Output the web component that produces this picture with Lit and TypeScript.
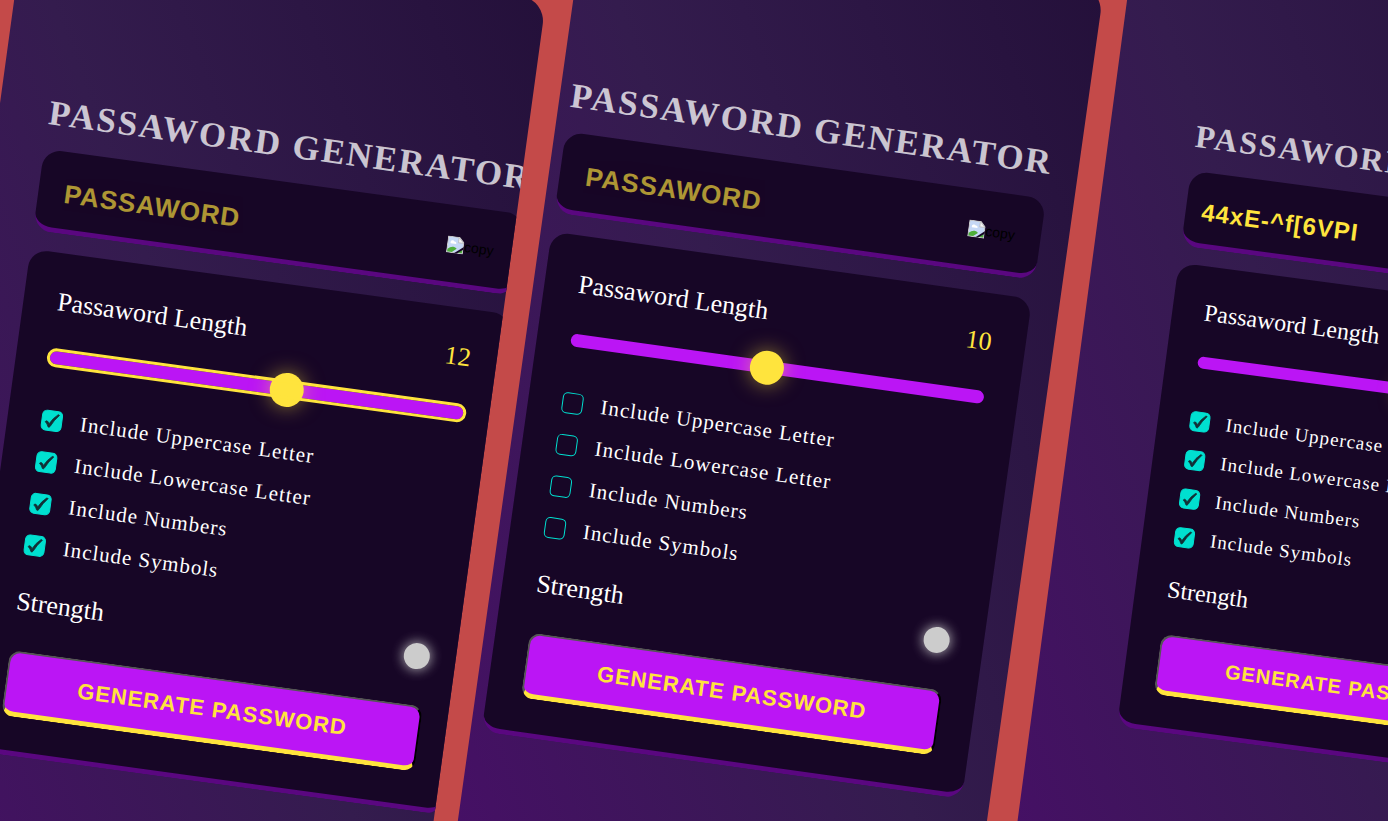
import { LitElement, html, css, svg } from "lit";
import { customElement, property } from "lit/decorators.js";

interface PanelData {
  slot: string;
  password: string;
  length: number;
  checked: boolean;
}

const PANELS: PanelData[] = [
  { slot: "first", password: "", length: 12, checked: true },
  { slot: "second", password: "", length: 10, checked: false },
  { slot: "third", password: "44xE-^f[6VPI", length: 12, checked: true },
];

const OPTIONS = [
  "Include Uppercase Letter",
  "Include Lowercase Letter",
  "Include Numbers",
  "Include Symbols",
];

const brokenImage = svg`
  <path d="M.5.5h10.500l4.500 4.500v10.500H.5z" fill="#c6d8f6" stroke="#c9c9c9"/>
  <path d="M3 6a2 2 0 0 1 3.600-1.200A1.700 1.700 0 0 1 8.500 7H3.300z" fill="#fff"/>
  <path d="M1 15v-2.500C3 10.500 5 9.500 7 10c1.200.3 2 .8 2.600 1.400L5.500 15z" fill="#4fae3a"/>
  <path d="M10.500 15l4.500-3.500V15z" fill="#4fae3a"/>
  <path d="M16.500 8.500L7.500 16h2.500l6.500-5z" fill="#170626"/>
  <path d="M10.500.5v5h5z" fill="#f4f4f4" stroke="#b9b9b9" stroke-width=".7"/>
`;

@customElement("password-panel")
class PasswordPanel extends LitElement {
  @property() password = "";
  @property({ type: Number }) length = 10;
  @property({ type: Boolean }) checked = false;

  static styles = css`
    :host {
      display: block;
      width: var(--content-width);
      font-family: "Liberation Serif", "Times New Roman", serif;
      color: #fff;
    }
    * {
      box-sizing: border-box;
    }
    .title {
      margin: 0 0 16px;
      font-size: var(--title-size);
      line-height: var(--title-line);
      letter-spacing: 2px;
      text-transform: uppercase;
      white-space: nowrap;
      color: rgba(255, 255, 255, 0.75);
    }
    .display {
      display: flex;
      align-items: center;
      justify-content: space-between;
      height: var(--display-height);
      margin-bottom: var(--display-gap);
      padding: 2px 26px 0 var(--display-pad);
      background: #170626;
      border-bottom: 5px solid #5a0780;
      border-radius: 18px;
    }
    .output {
      flex: 1;
      min-width: 0;
      padding: 6px 0 0;
      border: 0;
      outline: 0;
      background: transparent;
      color: #ffe43d;
      font: bold var(--text-size) "Liberation Sans", Arial, sans-serif;
      letter-spacing: 1px;
    }
    .output::placeholder {
      color: #ffe43d;
      opacity: 0.65;
    }
    .copy {
      display: flex;
      align-items: center;
      padding: 0;
      border: 0;
      background: none;
      color: #000;
      font: 14px "Liberation Sans", Arial, sans-serif;
    }
    .copy svg {
      width: 17px;
      height: 17px;
    }
    .settings {
      padding: var(--pad);
      background: #170626;
      border-bottom: 5px solid #5a0780;
      border-radius: 18px;
    }
    .row {
      display: flex;
      align-items: center;
      justify-content: space-between;
      font-size: var(--text-size);
      line-height: var(--text-line);
    }
    .count {
      color: #ffe43d;
    }
    .slider {
      display: block;
      appearance: none;
      width: 100%;
      height: var(--track);
      margin: var(--slider-top) 0 var(--slider-bottom);
      border-radius: 10px;
      background: #bb15f5;
      outline: 0;
    }
    .slider.active {
      outline: 3px solid #ffe43d;
    }
    .slider::-webkit-slider-thumb {
      appearance: none;
      width: 34px;
      height: 34px;
      border-radius: 50%;
      background: #ffe43d;
      box-shadow: 0 0 20px rgba(255, 228, 61, 0.5);
    }
    .options {
      display: grid;
      gap: var(--option-gap);
      margin-bottom: var(--options-bottom);
    }
    .option {
      display: flex;
      align-items: center;
      gap: var(--option-indent);
      font-size: var(--option-size);
      line-height: var(--option-line);
      letter-spacing: 1px;
      white-space: nowrap;
    }
    .tick {
      position: relative;
      display: grid;
      flex: none;
    }
    .tick input {
      appearance: none;
      width: var(--box);
      height: var(--box);
      margin: 0;
      border: 1px solid #00e0d0;
      border-radius: 5px;
    }
    .tick input:checked {
      background: #00e0d0;
    }
    .tick svg {
      display: none;
      position: absolute;
      inset: 0;
      width: 100%;
      height: 100%;
      pointer-events: none;
    }
    .tick input:checked + svg {
      display: block;
    }
    .lamp {
      width: 26px;
      height: 26px;
      border-radius: 50%;
      background: #ccc;
      box-shadow: 0 0 12px 1px rgba(204, 204, 204, 0.8);
    }
    .generate {
      display: block;
      width: 100%;
      height: var(--button-height);
      margin-top: var(--button-top);
      padding: 0;
      border: 2px solid;
      border-color: #555 #000 #ffe43d #555;
      border-bottom-width: 5px;
      border-radius: 12px;
      background: #bb15f5;
      color: #ffe43d;
      font: bold var(--button-size) "Liberation Sans", Arial, sans-serif;
      letter-spacing: 1px;
      text-transform: uppercase;
    }
  `;

  render() {
    return html`
      <h1 class="title">Passaword Generator</h1>
      <div class="display">
        <input class="output" readonly placeholder="PASSAWORD" aria-label="Password" .value=${this.password} />
        <button class="copy" type="button">
          <svg viewBox="0 0 16 16" aria-hidden="true">${brokenImage}</svg>copy
        </button>
      </div>
      <div class="settings">
        <div class="row">
          <label for="length">Passaword Length</label>
          <span class="count">${this.length}</span>
        </div>
        <input
          id="length"
          class="slider ${this.length === 12 && !this.password ? "active" : ""}"
          type="range" min="1" max="20" .value=${String(this.length)}
        />
        <div class="options">
          ${OPTIONS.map(
            (text) => html`
              <label class="option">
                <span class="tick">
                  <input type="checkbox" .checked=${this.checked} />
                  <svg viewBox="0 0 20 20" aria-hidden="true">
                    <path d="M3.800 11.600q.9-1.300 2-.8 1.100.6 1.900 2.400Q10.800 7 15 3.600q1.100-.5 1.500.3Q12 9 9.200 15.300q-.9 1.700-2 .9-1.200-2.900-3.400-4.600z" fill="#123036" stroke="#123036" stroke-width=".7" />
                  </svg>
                </span>
                ${text}
              </label>
            `
          )}
        </div>
        <div class="row">
          <span>Strength</span>
          <span class="lamp"></span>
        </div>
        <button class="generate" type="button">Generate Password</button>
      </div>
    `;
  }
}

@customElement("app-root")
class AppRoot extends LitElement {
  static styles = css`
    :host {
      display: block;
    }
    .stage {
      display: flex;
      align-items: flex-start;
      box-sizing: border-box;
      height: 100vh;
      padding-left: 24px;
      overflow: hidden;
      background: #c44a49;
    }
    .panel {
      box-sizing: border-box;
      flex: 0 0 38.6%;
      height: 990px;
      padding-top: 160px;
      overflow: hidden;
      border-radius: 25px;
      background: linear-gradient(to top right, #470f67, #341c4e, #24103a);
      transform: rotate(8deg);
      transform-origin: 0 0;
      --content-width: 485px;
      --title-size: 35px;
      --title-line: 40px;
      --display-height: 82px;
      --display-gap: 19px;
      --display-pad: 26px;
      --text-size: 26px;
      --text-line: 30px;
      --pad: 34px;
      --track: 13px;
      --slider-top: 34px;
      --slider-bottom: 44px;
      --box: 21px;
      --option-size: 21px;
      --option-line: 24px;
      --option-gap: 18px;
      --option-indent: 18px;
      --options-bottom: 31px;
      --button-size: 22px;
      --button-height: 66px;
      --button-top: 34px;
    }
    .first {
      margin: -72px 34px 0 0;
      padding-left: 50px;
      transform: rotate(7.8deg);
    }
    .second {
      flex-basis: 38.4%;
      margin: -84px 26px 0 0;
      padding-left: 11px;
    }
    .third {
      margin-top: -52px;
      padding-left: 86px;
      transform: rotate(7.6deg);
      --content-width: 449px;
      --title-size: 32px;
      --title-line: 37px;
      --display-height: 76px;
      --display-gap: 17px;
      --display-pad: 16px;
      --text-size: 24px;
      --text-line: 28px;
      --pad: 32px;
      --track: 12px;
      --slider-top: 30px;
      --slider-bottom: 42px;
      --box: 20px;
      --option-size: 19px;
      --option-line: 22px;
      --option-gap: 17px;
      --option-indent: 16px;
      --options-bottom: 28px;
      --button-size: 20px;
      --button-height: 61px;
      --button-top: 31px;
    }
  `;

  render() {
    return html`
      <main class="stage">
        ${PANELS.map(
          (p) => html`
            <section class="panel ${p.slot}">
              <password-panel .password=${p.password} .length=${p.length} .checked=${p.checked}></password-panel>
            </section>
          `
        )}
      </main>
    `;
  }
}
